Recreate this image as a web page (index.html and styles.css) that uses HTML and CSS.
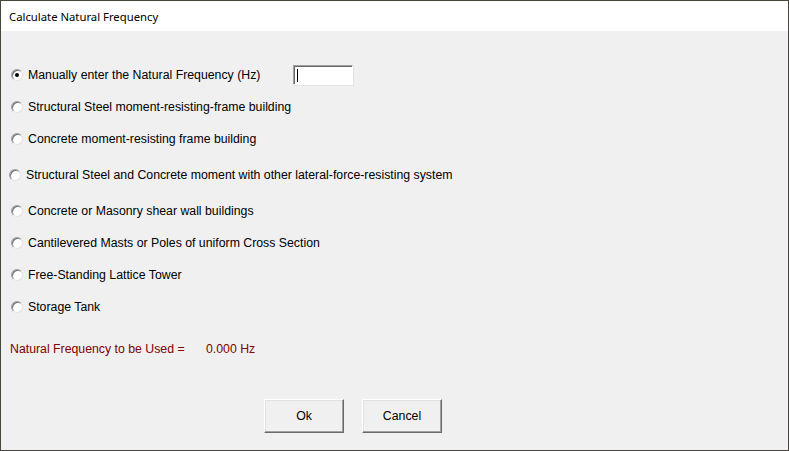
FILE: index.html
```html
<!DOCTYPE html>
<html lang="en">
<head>
    <meta charset="UTF-8">
    <title>Calculate Natural Frequency</title>
    <link rel="stylesheet" href="styles.css">
</head>
<body>
<div class="window">
    <div class="titleBar">Calculate Natural Frequency</div>
    <div class="content">
        <div class="options">
            <label class="option">
                <span class="radio checked"></span>
                <span class="optionText">Manually enter the Natural Frequency (Hz)</span>
                <span class="freqInput"><span class="caret"></span></span>
            </label>
            <label class="option">
                <span class="radio"></span>
                <span class="optionText">Structural Steel moment-resisting-frame building</span>
            </label>
            <label class="option">
                <span class="radio"></span>
                <span class="optionText">Concrete moment-resisting frame building</span>
            </label>
            <label class="option optionWide gapTop">
                <span class="radio"></span>
                <span class="optionText">Structural Steel and Concrete moment with other lateral-force-resisting system</span>
            </label>
            <label class="option gapTop">
                <span class="radio"></span>
                <span class="optionText">Concrete or Masonry shear wall buildings</span>
            </label>
            <label class="option">
                <span class="radio"></span>
                <span class="optionText">Cantilevered Masts or Poles of uniform Cross Section</span>
            </label>
            <label class="option">
                <span class="radio"></span>
                <span class="optionText">Free-Standing Lattice Tower</span>
            </label>
            <label class="option">
                <span class="radio"></span>
                <span class="optionText">Storage Tank</span>
            </label>
        </div>
        <div class="result">
            <span class="resultLabel">Natural Frequency to be Used =</span>
            <span class="resultValue">0.000 Hz</span>
        </div>
        <div class="buttons">
            <button class="btn">Ok</button>
            <button class="btn">Cancel</button>
        </div>
    </div>
</div>
</body>
</html>
```

FILE: styles.css
```css
* {
    margin: 0;
    padding: 0;
    box-sizing: border-box;
}
body {
    width: 789px;
    height: 451px;
    overflow: hidden;
    font-family: "Liberation Sans", Arial, sans-serif;
    font-size: 12.3px;
    color: #000;
    background: #f0f0f0;
}
.window {
    width: 789px;
    height: 451px;
    border: 1px solid #48453a;
    background: #f0f0f0;
    display: flex;
    flex-direction: column;
}
.titleBar {
    height: 30px;
    background: #fff;
    padding-left: 8px;
    display: flex;
    align-items: center;
    font-family: "Noto Sans", "Open Sans", sans-serif;
    font-size: 11.3px;
    color: #000;
}
.content {
    flex: 1;
    display: flex;
    flex-direction: column;
    padding: 28px 0 0 9px;
}
.options {
    display: flex;
    flex-direction: column;
}
.option {
    height: 32px;
    display: flex;
    align-items: center;
    gap: 5px;
    padding-left: 1px;
}
.optionWide {
    padding-left: 0;
    margin-left: -1px;
    gap: 5px;
}
.gapTop {
    margin-top: 4px;
}
.radio {
    width: 12px;
    height: 12px;
    border-radius: 50%;
    background: #fff;
    border: 1px solid #a0a0a0;
    border-right-color: #e3e3e3;
    border-bottom-color: #e3e3e3;
    box-shadow: inset 1px 1px 0 #6d6d6d;
    position: relative;
    flex-shrink: 0;
}
.radio.checked::after {
    content: "";
    position: absolute;
    left: 3px;
    top: 3px;
    width: 4px;
    height: 4px;
    border-radius: 50%;
    background: #000;
}
.freqInput {
    width: 60px;
    height: 20px;
    margin-left: 28px;
    background: #fff;
    border: 1px solid #fff;
    border-top-color: #a0a0a0;
    border-left-color: #a0a0a0;
    box-shadow: inset 1px 1px 0 #696969, 1px 1px 0 #e3e3e3;
    padding: 3px 0 0 3px;
}
.caret {
    display: block;
    width: 1px;
    height: 13px;
    background: #000;
}
.result {
    height: 32px;
    margin-top: 10px;
    display: flex;
    align-items: center;
    color: #800000;
}
.resultLabel {
    width: 196px;
}
.buttons {
    margin-top: 34px;
    display: flex;
    gap: 18px;
    padding-left: 254px;
}
.btn {
    width: 80px;
    height: 34px;
    font-family: "Liberation Sans", Arial, sans-serif;
    font-size: 12.3px;
    color: #000;
    background: #f0f0f0;
    border: 1px solid #fff;
    border-right-color: #696969;
    border-bottom-color: #696969;
    box-shadow: inset -1px -1px 0 #a0a0a0, inset 1px 1px 0 #e3e3e3;
}
```
